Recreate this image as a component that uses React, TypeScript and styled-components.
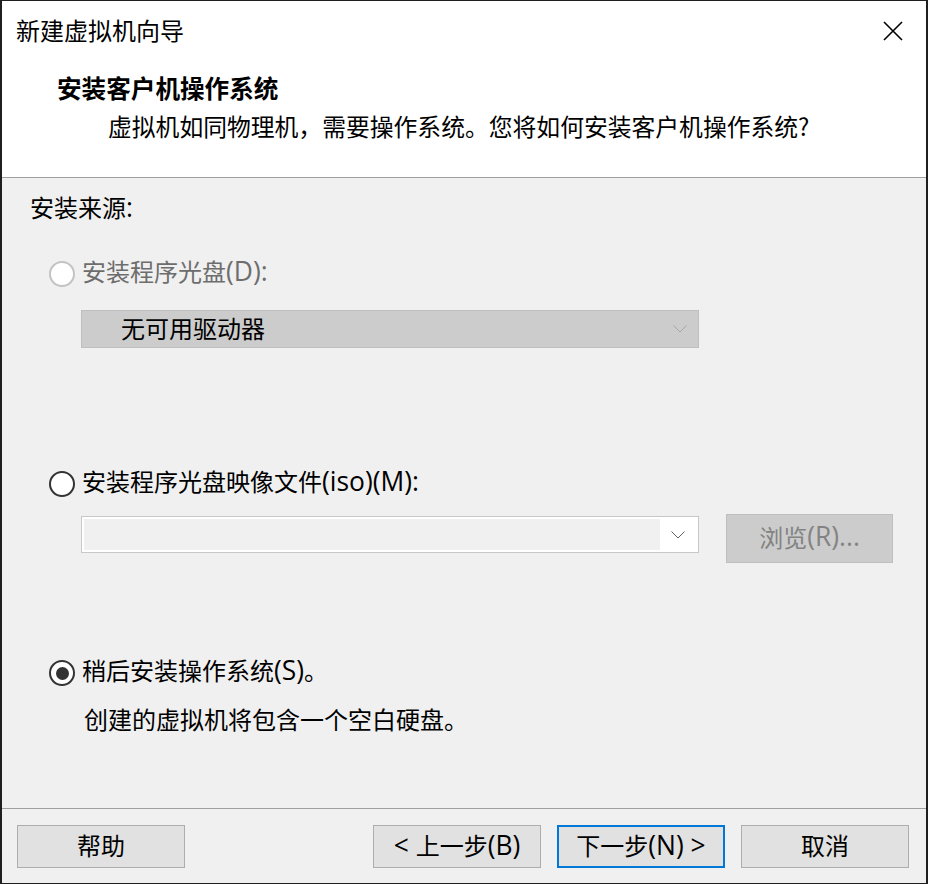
import React from "react";
import styled, { createGlobalStyle, css } from "styled-components";

const Global = createGlobalStyle`
  html, body { margin: 0; padding: 0; background: #1f1f1f; }
  body { width: 928px; height: 884px; overflow: hidden; }
  * { box-sizing: border-box; }
`;

const FONT = `"Segoe UI", "Open Sans", "Noto Sans CJK SC", sans-serif`;

const Window = styled.div`
  margin: 1px 2px 1px 2px;
  width: 924px;
  height: 882px;
  display: flex;
  flex-direction: column;
  background: #f0f0f0;
  font-family: "Noto Sans CJK SC", sans-serif;
  color: #000;
`;

const TitleBar = styled.div`
  height: 62px;
  background: #fff;
  display: flex;
  align-items: center;
  justify-content: space-between;
  padding: 0 23px 2px 14px;
`;

const Title = styled.div`
  font-size: 24px;
  line-height: 32px;
  padding-bottom: 2px;
`;

const CloseIcon = styled.svg`
  width: 20px;
  height: 20px;
  display: block;
`;

const Header = styled.div`
  height: 114px;
  background: #fff;
  display: flex;
  flex-direction: column;
  padding: 8px 0 0 55px;
  gap: 7px;
`;

const Heading = styled.div`
  font-size: 24.6px;
  line-height: 32px;
  font-weight: 700;
`;

const Subtitle = styled.div`
  font-size: 23.8px;
  line-height: 32px;
  padding-left: 51px;
`;

const Divider = styled.div`
  height: 1px;
  background: #a0a0a0;
  flex: none;
`;

const Body = styled.div`
  flex: 1;
  display: flex;
  flex-direction: column;
  padding: 13px 0 0 28px;
`;

const Text = styled.div<{ $gap?: number; $indent?: number }>`
  font-size: 24px;
  line-height: 32px;
  margin-top: ${(p) => p.$gap ?? 0}px;
  padding-left: ${(p) => p.$indent ?? 0}px;
`;

const RadioRow = styled.div<{ $gap: number }>`
  display: flex;
  align-items: center;
  gap: 7px;
  margin-top: ${(p) => p.$gap}px;
  padding-left: 19px;
  height: 32px;
`;

const RadioCircle = styled.span<{ $checked?: boolean; $disabled?: boolean }>`
  width: 26px;
  height: 26px;
  border-radius: 50%;
  border: 2px solid ${(p) => (p.$disabled ? "#c3c3c3" : "#333333")};
  background: #fff;
  display: flex;
  align-items: center;
  justify-content: center;
  flex: none;
  ${(p) =>
    p.$checked &&
    css`
      &::after {
        content: "";
        width: 13px;
        height: 13px;
        border-radius: 50%;
        background: #333333;
      }
    `}
`;

const RadioLabel = styled.span<{ $disabled?: boolean }>`
  font-size: 24px;
  line-height: 32px;
  padding-bottom: 6px;
  color: ${(p) => (p.$disabled ? "#6d6d6d" : "#000")};
`;

const Latin = styled.span`
  font-family: ${FONT};
  font-size: 1.1em;
`;

const ComboRow = styled.div<{ $gap: number }>`
  display: flex;
  align-items: flex-start;
  gap: 27px;
  margin-top: ${(p) => p.$gap}px;
  padding-left: 51px;
`;

const Combo = styled.div<{ $disabled?: boolean }>`
  width: 618px;
  height: ${(p) => (p.$disabled ? 38 : 37)}px;
  border: 1px solid ${(p) => (p.$disabled ? "#bfbfbf" : "#c8c8c8")};
  background: ${(p) => (p.$disabled ? "#cccccc" : "#ffffff")};
  display: flex;
  align-items: stretch;
  padding: ${(p) => (p.$disabled ? "0" : "2px")};
`;

const ComboValue = styled.div<{ $field?: boolean }>`
  flex: 1;
  display: flex;
  align-items: center;
  padding: 0 0 4px 39px;
  font-size: 24px;
  background: ${(p) => (p.$field ? "#f0f0f0" : "transparent")};
`;

const ComboArrow = styled.div`
  width: 36px;
  display: flex;
  align-items: center;
  justify-content: center;
`;

const BrowseButton = styled.div`
  width: 167px;
  height: 49px;
  margin-top: -2px;
  padding-bottom: 5px;
  background: #cccccc;
  border: 1px solid #bfbfbf;
  display: flex;
  align-items: center;
  justify-content: center;
  font-size: 24px;
  color: #838383;
`;

const Footer = styled.div`
  height: 74px;
  display: flex;
  align-items: flex-start;
  padding: 16px 17px 0 15px;
  gap: 16px;
`;

const Spacer = styled.div`
  flex: 1;
`;

const Button = styled.div<{ $default?: boolean }>`
  width: 168px;
  height: 43px;
  padding-bottom: 4px;
  background: #e1e1e1;
  border: ${(p) => (p.$default ? "2px solid #0078d7" : "1px solid #adadad")};
  display: flex;
  align-items: center;
  justify-content: center;
  font-size: 24px;
  line-height: 32px;
  color: #000;
`;

const Chevron: React.FC<{ color: string }> = ({ color }) => (
  <svg width="14" height="8" viewBox="0 0 14 8">
    <polyline points="0.5,0.5 7,7 13.5,0.5" fill="none" stroke={color} strokeWidth="1" />
  </svg>
);

export default function App() {
  return (
    <>
      <Global />
      <Window>
        <TitleBar>
          <Title>新建虚拟机向导</Title>
          <CloseIcon viewBox="0 0 20 20">
            <path d="M1 1 L19 19 M19 1 L1 19" stroke="#000" strokeWidth="1.6" fill="none" />
          </CloseIcon>
        </TitleBar>
        <Header>
          <Heading>安装客户机操作系统</Heading>
          <Subtitle>虚拟机如同物理机，需要操作系统。您将如何安装客户机操作系统?</Subtitle>
        </Header>
        <Divider />
        <Body>
          <Text>
            安装来源<Latin>:</Latin>
          </Text>
          <RadioRow $gap={35}>
            <RadioCircle $disabled />
            <RadioLabel $disabled>
              安装程序光盘<Latin>(D):</Latin>
            </RadioLabel>
          </RadioRow>
          <ComboRow $gap={20}>
            <Combo $disabled>
              <ComboValue>无可用驱动器</ComboValue>
              <ComboArrow>
                <Chevron color="#a6a6a6" />
              </ComboArrow>
            </Combo>
          </ComboRow>
          <RadioRow $gap={120}>
            <RadioCircle />
            <RadioLabel>
              安装程序光盘映像文件<Latin>(iso)(M):</Latin>
            </RadioLabel>
          </RadioRow>
          <ComboRow $gap={16}>
            <Combo>
              <ComboValue $field />
              <ComboArrow>
                <Chevron color="#606060" />
              </ComboArrow>
            </Combo>
            <BrowseButton>
              浏览<Latin>(R)...</Latin>
            </BrowseButton>
          </ComboRow>
          <RadioRow $gap={94}>
            <RadioCircle $checked />
            <RadioLabel>
              稍后安装操作系统<Latin>(S)</Latin>。
            </RadioLabel>
          </RadioRow>
          <Text $gap={14} $indent={54}>
            创建的虚拟机将包含一个空白硬盘。
          </Text>
        </Body>
        <Divider />
        <Footer>
          <Button>帮助</Button>
          <Spacer />
          <Button>
            <Latin>&lt;&nbsp;</Latin>上一步<Latin>(B)</Latin>
          </Button>
          <Button $default>
            下一步<Latin>(N)&nbsp;&gt;</Latin>
          </Button>
          <Button>取消</Button>
        </Footer>
      </Window>
    </>
  );
}
